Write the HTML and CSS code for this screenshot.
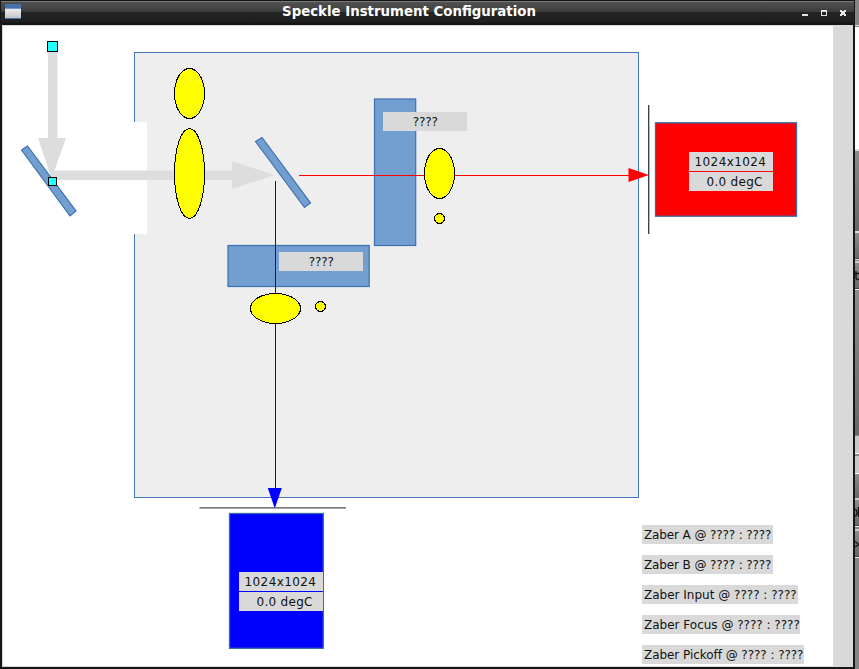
FILE: index.html
```html
<!DOCTYPE html>
<html lang="en">
<head>
<meta charset="utf-8">
<title>Speckle Instrument Configuration</title>
<link rel="stylesheet" href="styles.css">
</head>
<body>
<div class="desktop">
  <main class="window">
    <header class="titlebar">
      <svg class="app-icon" width="16" height="15" viewBox="0 0 16 15">
        <defs><linearGradient id="ig" x1="0" y1="0" x2="0" y2="1"><stop offset="0" stop-color="#eee"/><stop offset="1" stop-color="#c4c4c4"/></linearGradient></defs>
        <rect width="16" height="15" fill="#4572ae"/><rect y="4" width="16" height="1" fill="#7396c4"/><rect y="5" width="16" height="9" fill="url(#ig)"/>
      </svg>
      <h1 class="title">Speckle Instrument Configuration</h1>
      <svg class="controls" width="46" height="8" viewBox="0 0 46 8" shape-rendering="crispEdges" fill="#e4e4e4">
        <rect y="5" width="6" height="2"/>
        <path fill-rule="evenodd" d="M19 1h6v6h-6zM20 3v3h4v-3z"/>
        <path d="M38 1h2v1h2v-1h2v2h-1v2h1v2h-2v-1h-2v1h-2v-2h1v-2h-1z"/>
      </svg>
    </header>
    <section class="content">
      <svg class="diagram" width="830" height="641" viewBox="3 26 830 641">
        <rect class="bench" x="134.5" y="52.5" width="504" height="445"/>
        <rect x="133" y="122" width="14" height="112" fill="#fff"/>
        <g fill="#ddd">
          <path d="M48 46h9.500v92H66L54.500 170.500H232V161L274.500 175L232 189V180H52L38 138h10z"/>
        </g>
        <g class="glass">
          <path d="M21.500 150L27.500 146L76 211L70 216z"/>
          <path d="M255.500 141.500L262 137.500L310.500 203L304.500 207.500z"/>
          <rect x="374.500" y="99" width="41.200" height="146.500"/>
          <rect x="228" y="245.500" width="141.200" height="41"/>
        </g>
        <rect x="299" y="175" width="331" height="1" fill="#f00"/>
        <rect x="275" y="181" width="1" height="308" fill="#00f"/>
        <path d="M628.500 168L649 175L628.500 182z" fill="#f00"/>
        <path d="M267.800 488H281.800L274.800 508.500z" fill="#00f"/>
        <g class="lens" shape-rendering="crispEdges">
          <ellipse cx="189.500" cy="93.500" rx="15" ry="25"/>
          <ellipse cx="189.500" cy="173.500" rx="15" ry="45"/>
          <ellipse cx="439.500" cy="173.500" rx="15" ry="25"/>
          <circle cx="439.500" cy="218.500" r="5"/>
          <ellipse cx="275.500" cy="308.500" rx="25" ry="15"/>
          <circle cx="320.500" cy="306.500" r="5"/>
        </g>
        <g class="handle">
          <rect x="47.500" y="41.500" width="10" height="10"/>
          <rect x="48.500" y="177.500" width="8" height="8"/>
        </g>
        <path d="M648.700 105V234" stroke="#333b40" stroke-width="1.300"/>
        <path d="M199.500 507.800H346" stroke="#554f50" stroke-width="1.300"/>
        <rect class="camera" x="655.500" y="122.800" width="141" height="93.400" fill="#f00"/>
        <rect class="camera" x="229.500" y="513.500" width="93.800" height="134.800" fill="#00f"/>
        <g fill="#d9d9d9">
          <rect x="383" y="112" width="84" height="19"/><rect x="279" y="252" width="84" height="19"/>
          <rect x="689" y="152" width="84" height="19"/><rect x="689" y="172" width="84" height="19"/>
          <rect x="239" y="572" width="84" height="19"/><rect x="239" y="592" width="84" height="19"/>
        </g>
        <g class="label">
          <text x="412.800" y="126" textLength="25">????</text>
          <text x="308.800" y="266" textLength="25">????</text>
          <text x="694.500" y="166" textLength="71.500">1024x1024</text>
          <text x="706.500" y="186" textLength="56">0.0 degC</text>
          <text x="244.500" y="586" textLength="71.500">1024x1024</text>
          <text x="256.500" y="606" textLength="56">0.0 degC</text>
        </g>
      </svg>
      <ul class="stages">
        <li class="a">Zaber A @ ???? : ????</li>
        <li class="b">Zaber B @ ???? : ????</li>
        <li class="input">Zaber Input @ ???? : ????</li>
        <li class="focus">Zaber Focus @ ???? : ????</li>
        <li class="pickoff">Zaber Pickoff @ ???? : ????</li>
      </ul>
    </section>
  </main>
  <aside class="behind">
    <svg width="4" height="669" viewBox="0 0 4 669">
      <defs><linearGradient id="metal" x1="0" y1="0" x2="0" y2="1"><stop offset="0" stop-color="#8c8c8c"/><stop offset="1" stop-color="#686868"/></linearGradient></defs>
      <rect width="4" height="669" fill="#858585"/>
      <rect y="25" width="4" height="1" fill="#ddd"/><rect y="26" width="4" height="1" fill="#888"/><rect y="27" width="4" height="122" fill="#fff"/>
      <rect y="149" width="4" height="2" fill="#ddd"/><rect y="151" width="4" height="80" fill="url(#metal)"/>
      <rect y="231" width="4" height="2" fill="#ddd"/><rect y="233" width="4" height="25" fill="url(#metal)"/>
      <rect y="258" width="4" height="1" fill="#444"/><rect y="259" width="4" height="1" fill="#ddd"/><rect y="261" width="4" height="2" fill="#ccc"/>
      <rect y="263" width="4" height="25" fill="url(#metal)"/><rect y="288" width="4" height="1" fill="#444"/><rect y="289" width="4" height="1" fill="#eee"/>
      <rect y="290" width="4" height="145" fill="url(#metal)"/><rect y="436" width="4" height="17" fill="#c8c8c8"/><rect y="453" width="4" height="1" fill="#fff"/>
      <rect y="456" width="4" height="17" fill="#c8c8c8"/><rect y="473" width="4" height="1" fill="#fff"/><rect y="474" width="4" height="24" fill="url(#metal)"/>
      <rect y="498" width="4" height="2" fill="#ccc"/><rect y="500" width="4" height="25" fill="url(#metal)"/><rect y="525" width="4" height="1" fill="#444"/>
      <rect y="526" width="4" height="1" fill="#eee"/><rect y="529" width="4" height="2" fill="#ccc"/><rect y="531" width="4" height="25" fill="url(#metal)"/>
      <rect y="556" width="4" height="1" fill="#444"/><rect y="557" width="4" height="1" fill="#eee"/>
      <path d="M1 271V278Q1 279.500 4 279.500M0 273.500H4" class="mark"/>
      <path d="M0 509.500Q2 509.500 2 512.500T0 516M3.500 507V517" class="mark"/>
      <path d="M0 541.500L4 544.500L0 547" class="mark"/>
    </svg>
  </aside>
</div>
</body>
</html>
```

FILE: styles.css
```css
* { box-sizing: border-box; }
body { margin: 0; overflow: hidden; font-family: "DejaVu Sans", sans-serif; }
.desktop { display: flex; width: 859px; height: 669px; }
.window { width: 855px; height: 669px; background: #151618; padding: 0 2px 2px 2px; }
.titlebar {
  display: flex; align-items: center; height: 25px; margin: 0 -1px; padding: 0 6px 2px 4px;
  background: linear-gradient(#151515 0 1px, #777 1px 2px, #525252 2px, #3b3b3b 12px, #222 12px, #202020 22px, #151515 23px);
}
.app-icon { flex: none; }
.title { flex: 1; margin: 0; padding-right: 5px; text-align: center; color: #fff; font-size: 13.33px; line-height: 23px; }
.controls { flex: none; margin-top: 2px; }
.content { position: relative; height: 642px; border: solid #d9d9d9; border-width: 1px 20px 1px 1px; background: #fff; overflow: hidden; }
.diagram { display: block; }
.bench { fill: #eee; stroke: #4576b5; }
.glass { fill: #729fcf; stroke: #3d70b2; stroke-width: 1.2; }
.lens { fill: #ff0; stroke: #000; }
.handle { fill: #2ff; stroke: #000; }
.camera { stroke: #3968ab; stroke-width: 1.3; }
.label { font-size: 12px; fill: #111; }
.stages {
  position: absolute; left: 639px; top: 499px; margin: 0; padding: 0; list-style: none;
  display: flex; flex-direction: column; align-items: flex-start; gap: 11px;
  font-size: 12px; line-height: 20px; color: #111; white-space: nowrap;
}
.stages li { height: 19px; padding-left: 2px; background: #d9d9d9; }
.a, .b { width: 131px; letter-spacing: -0.12px; }
.input { width: 156px; }
.focus { width: 158px; }
.pickoff { width: 162px; letter-spacing: -0.05px; }
.behind { width: 4px; }
.behind svg { display: block; }
.mark { fill: none; stroke: #111; stroke-width: 1.3; }
```
